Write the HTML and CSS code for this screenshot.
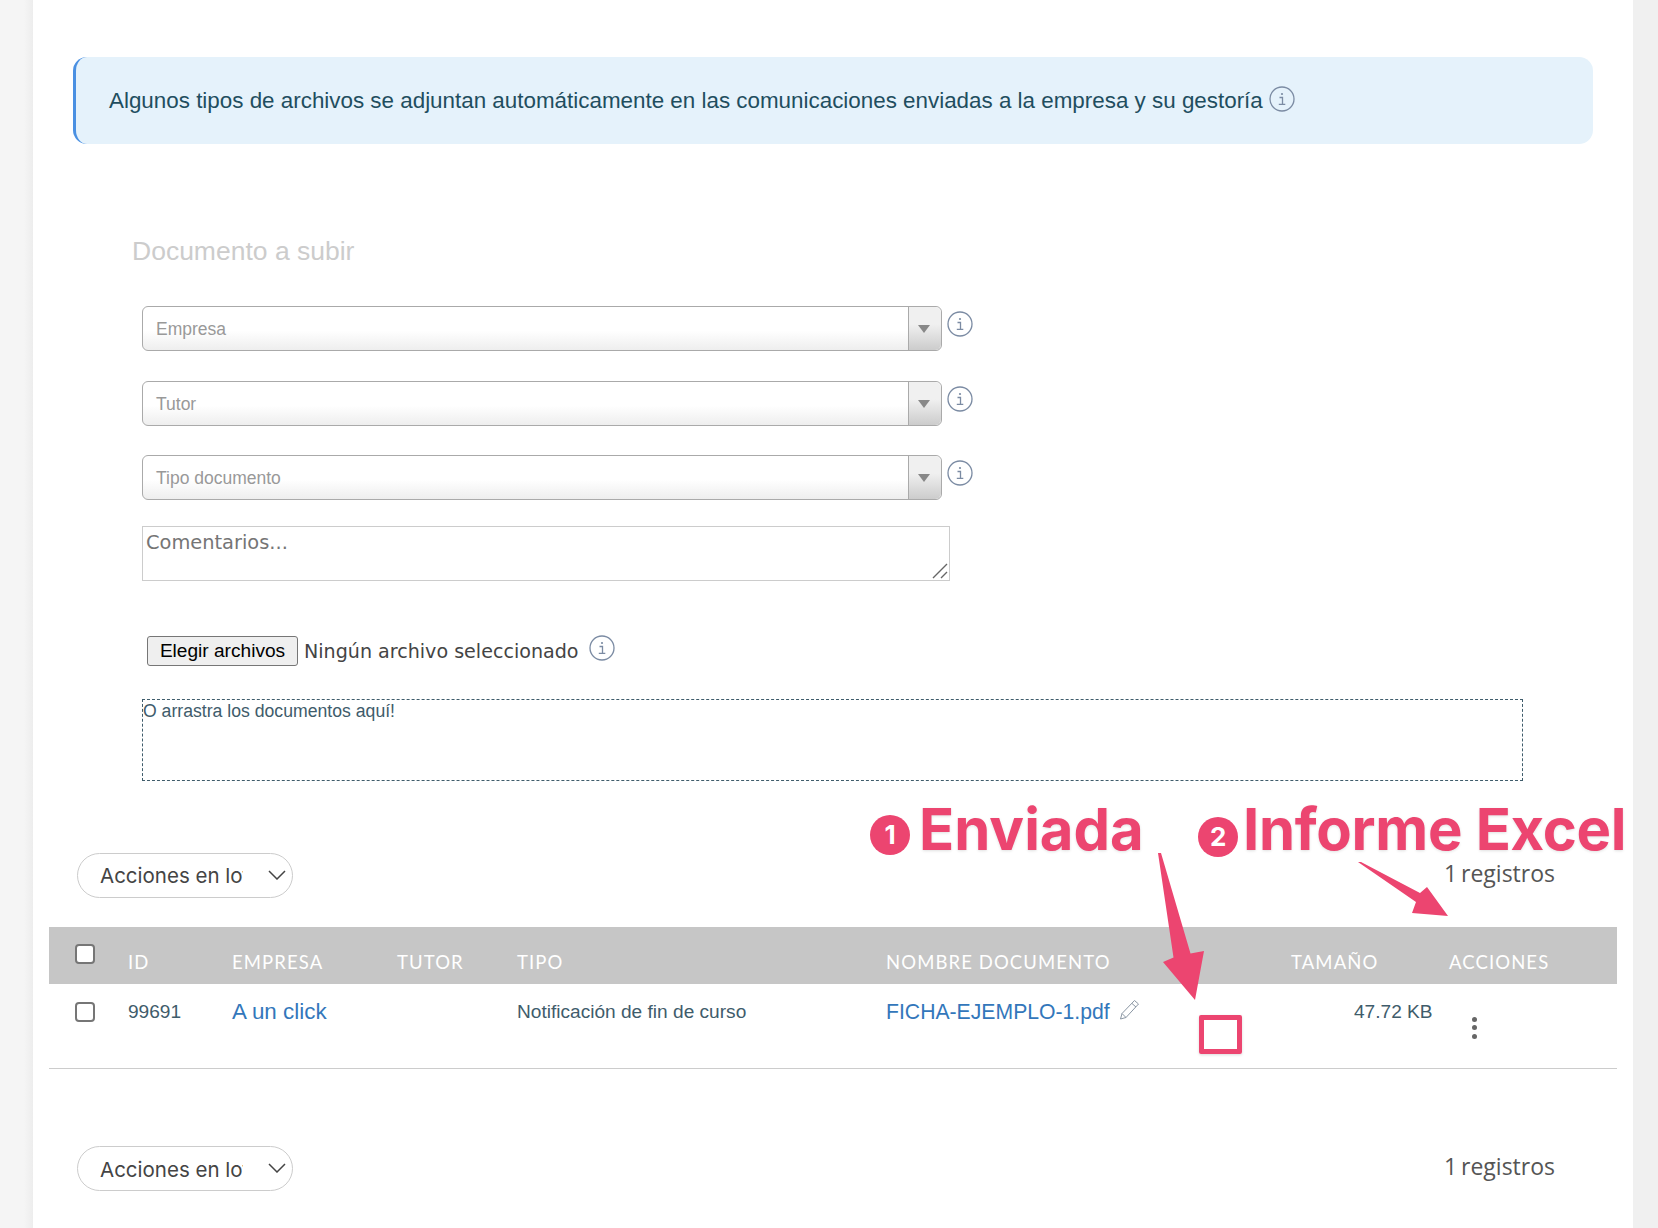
FILE: index.html
```html
<!DOCTYPE html>
<html lang="es">
<head>
<meta charset="utf-8">
<title>Documentos</title>
<link rel="stylesheet" href="styles.css">
</head>
<body>
<main class="card">
  <div class="alert">
    <span>Algunos tipos de archivos se adjuntan automáticamente en las comunicaciones enviadas a la empresa y su gestoría</span>
    <svg class="info" viewBox="0 0 26 26"><use href="#i-info"/></svg>
  </div>

  <section class="form">
    <h2 class="form-title">Documento a subir</h2>
    <div class="field">
      <div class="combo"><span class="combo-label">Empresa</span><span class="combo-arrow"><i class="tri"></i></span></div>
      <svg class="info" viewBox="0 0 26 26"><use href="#i-info"/></svg>
    </div>
    <div class="field">
      <div class="combo"><span class="combo-label">Tutor</span><span class="combo-arrow"><i class="tri"></i></span></div>
      <svg class="info" viewBox="0 0 26 26"><use href="#i-info"/></svg>
    </div>
    <div class="field">
      <div class="combo"><span class="combo-label">Tipo documento</span><span class="combo-arrow"><i class="tri"></i></span></div>
      <svg class="info" viewBox="0 0 26 26"><use href="#i-info"/></svg>
    </div>
    <div class="comment">
      <textarea class="comment-input" placeholder="Comentarios..."></textarea>
      <svg class="grip" viewBox="0 0 16 16"><path d="M1 15 15 1M9 15l6-6"/></svg>
    </div>
    <div class="file-row">
      <button class="file-btn" type="button">Elegir archivos</button>
      <span class="file-name">Ningún archivo seleccionado</span>
      <svg class="info" viewBox="0 0 26 26"><use href="#i-info"/></svg>
    </div>
    <div class="drop">O arrastra los documentos aquí!</div>
  </section>

  <div class="bar bar-top">
    <div class="bulk">
      <select class="bulk-select"><option>Acciones en lote</option></select>
      <svg class="chev" viewBox="0 0 18 10"><path d="M1 1l8 8 8-8"/></svg>
    </div>
    <span class="count">1 registros</span>
  </div>

  <table class="table">
    <thead>
      <tr>
        <th class="c-check"><input class="check" type="checkbox"></th>
        <th class="c-id">ID</th>
        <th class="c-emp">EMPRESA</th>
        <th class="c-tut">TUTOR</th>
        <th class="c-tipo">TIPO</th>
        <th class="c-doc">NOMBRE DOCUMENTO</th>
        <th class="c-env"></th>
        <th class="c-size">TAMAÑO</th>
        <th class="c-act">ACCIONES</th>
      </tr>
    </thead>
    <tbody>
      <tr>
        <td><input class="check" type="checkbox"></td>
        <td>99691</td>
        <td><a class="link link-emp" href="#">A un click</a></td>
        <td></td>
        <td>Notificación de fin de curso</td>
        <td class="doc-cell"><a class="link" href="#">FICHA-EJEMPLO-1.pdf</a>
          <svg class="pencil" viewBox="0 0 21 21"><path d="M15.5 1.5 19.5 5 7 18.5 1.5 20 3 14.5Z M13 4.5l4 3.5 M3 14.5l4 4"/></svg>
        </td>
        <td></td>
        <td class="size-cell">47.72 KB</td>
        <td class="act-cell"><span class="dots"><i></i><i></i><i></i></span></td>
      </tr>
    </tbody>
  </table>

  <div class="bar bar-bottom">
    <div class="bulk">
      <select class="bulk-select"><option>Acciones en lote</option></select>
      <svg class="chev" viewBox="0 0 18 10"><path d="M1 1l8 8 8-8"/></svg>
    </div>
    <span class="count">1 registros</span>
  </div>
</main>

<div class="note note-1"><span class="badge">1</span><span class="note-text">Enviada</span></div>
<div class="note note-2"><span class="badge">2</span><span class="note-text">Informe Excel</span></div>
<div class="mark"></div>
<svg class="arrows" viewBox="0 0 1658 1228">
  <path d="M1158 853 1161 853 1190.500 953.500 1204 951 1195 1000 1163 962 1173.500 957.500Z"/>
  <path d="M1358 862 1361 862 1420 893 1427 887 1448 916 1412 913 1416 902Z"/>
</svg>

<svg class="defs" width="0" height="0">
  <defs>
    <symbol id="i-info" viewBox="0 0 26 26">
      <circle cx="13" cy="13" r="12" fill="none" stroke="#7b8ba3" stroke-width="1.300"/>
      <path d="M10.500 11.500h3v6.500M9.800 18.300h6.500" fill="none" stroke="#7b8ba3" stroke-width="1.300"/>
      <circle cx="13" cy="8" r="1.100" fill="#7b8ba3"/>
    </symbol>
  </defs>
</svg>
</body>
</html>
```
FILE: styles.css
```css
* { box-sizing: border-box; }
html, body { margin: 0; height: 1228px; overflow: hidden; }
body {
  position: relative;
  background: linear-gradient(90deg, #f5f5f5 24px, #ededed 33px, #f0f0f0 33px);
  font-family: "Liberation Sans", Arial, sans-serif;
  color: #3f5c6b;
}
.card {
  width: 1600px;
  height: 1228px;
  margin-left: 33px;
  padding-top: 57px;
  background: #fff;
}
.info { width: 26px; height: 26px; flex: none; }

.alert {
  display: flex;
  align-items: center;
  gap: 6px;
  height: 87px;
  margin: 0 40px;
  padding-left: 33px;
  border-left: 3px solid #4a90e2;
  border-radius: 14px;
  background: #e5f2fb;
  color: #1f4e5f;
  font-size: 22.400px;
}
.alert .info { margin-top: -3px; }

.form { margin: 89px 0 0 99px; }
.form-title {
  margin: 0 0 37px;
  height: 36px;
  font-weight: 400;
  font-size: 26.500px;
  line-height: 36px;
  color: #ccc;
}
.field {
  display: flex;
  align-items: flex-start;
  gap: 5px;
  margin: 0 0 29.500px 10px;
}
.field .info { margin-top: 5px; }
.combo {
  display: flex;
  width: 800px;
  height: 45px;
  border: 1px solid #aaa;
  border-radius: 6px;
  background: linear-gradient(#fff 55%, #eee);
  font-size: 17.500px;
  color: #999;
}
.combo-label { flex: 1; padding: 0 0 0 13px; line-height: 45px; }
.combo-arrow {
  display: flex;
  align-items: center;
  justify-content: center;
  width: 33px;
  border-left: 1px solid #aaa;
  border-radius: 0 6px 6px 0;
  background: linear-gradient(#f0f0f0 40%, #ccc);
}
.tri {
  margin: 1px 2px 0 0;
  border-style: solid;
  border-width: 8px 6px 0;
  border-color: #888 transparent transparent;
}
.comment { position: relative; width: 808px; height: 55px; margin: -4px 0 0 10px; }
.comment-input {
  display: block;
  width: 100%;
  height: 100%;
  padding: 4px 3px;
  border: 1px solid #ccc;
  border-radius: 0;
  outline: 0;
  resize: none;
  font-family: "DejaVu Sans", sans-serif;
  font-size: 19.400px;
  color: #444;
}
.comment-input::placeholder { color: #757575; opacity: 1; }
.grip {
  position: absolute;
  right: 2px;
  bottom: 2px;
  width: 16px;
  height: 16px;
  fill: none;
  stroke: #666;
  stroke-width: 1.400;
}
.file-row {
  display: flex;
  align-items: center;
  height: 30px;
  margin: 55px 0 0 15px;
}
.file-btn {
  width: 151px;
  height: 30px;
  padding: 0;
  border: 1px solid #767676;
  border-radius: 3px;
  background: #efefef;
  font-family: "Liberation Sans", Arial, sans-serif;
  font-size: 19.100px;
  color: #000;
}
.file-name {
  margin-left: 6px;
  padding-top: 1px;
  font-family: "DejaVu Sans", sans-serif;
  font-size: 19.100px;
  color: #444;
}
.file-row .info { margin: -5px 0 0 10px; }
.drop {
  width: 1381px;
  height: 82px;
  margin: 33px 0 0 10px;
  border: 1px dashed #3f5c6b;
  font-size: 17.650px;
  line-height: 22px;
}

.bar {
  display: flex;
  align-items: center;
  justify-content: space-between;
  padding: 0 78px 0 44px;
}
.bar-top { height: 45px; margin-top: 72px; }
.bar-bottom { height: 45px; margin-top: 77px; }
.bulk { position: relative; width: 216px; height: 45px; }
.bulk-select {
  width: 100%;
  height: 100%;
  padding: 1px 49px 0 22px;
  border: 1px solid #ccc;
  border-radius: 23px;
  appearance: none;
  background: #fff;
  font-family: Inter, "Liberation Sans", sans-serif;
  font-size: 20.500px;
  color: #444;
}
.chev {
  position: absolute;
  right: 7px;
  top: 17px;
  width: 18px;
  height: 10px;
  fill: none;
  stroke: #444;
  stroke-width: 1.500;
}
.count {
  margin-bottom: 5px;
  font-family: "Open Sans", sans-serif;
  font-size: 23px;
  word-spacing: -2px;
  color: #555;
}

.table {
  width: 1568px;
  margin: 29px 0 0 16px;
  border-collapse: collapse;
  table-layout: fixed;
}
.table th {
  height: 57px;
  padding: 14px 0 0;
  background: #c6c6c6;
  text-align: left;
  font-family: Lato, sans-serif;
  font-weight: 400;
  font-size: 18.500px;
  letter-spacing: 1.100px;
  color: #fff;
}
.table td {
  height: 85px;
  padding: 0 0 28px;
  border-bottom: 1px solid #ccc;
  font-size: 19.100px;
  color: #3f5c6b;
}
.c-check { width: 79px; }
.c-id { width: 104px; }
.c-emp { width: 165px; }
.c-tut { width: 120px; }
.c-tipo { width: 369px; }
.c-doc { width: 300px; }
.c-env { width: 105px; }
.c-size { width: 158px; }
.table th:first-child, .table td:first-child { padding-left: 26px; }
.table th:first-child { padding-top: 0; padding-bottom: 3px; }
.check {
  display: block;
  width: 20px;
  height: 20px;
  margin: 0;
  border: 2px solid #767676;
  border-radius: 4px;
  appearance: none;
  background: #fff;
}
.link { color: #3377bb; text-decoration: none; font-size: 21.200px; }
.link-emp { font-size: 22.400px; }
.doc-cell { white-space: nowrap; }
.pencil {
  width: 21px;
  height: 21px;
  margin-left: 4px;
  vertical-align: -1px;
  fill: none;
  stroke: #8a96a3;
  stroke-width: 1;
}
.size-cell { padding-left: 63px !important; }
.act-cell { padding: 0 0 8px 23px !important; }
.act-cell .dots { display: inline-flex; flex-direction: column; gap: 3.500px; }
.dots i { display: block; width: 5px; height: 5px; border-radius: 50%; background: #666; }

.note {
  position: absolute;
  display: flex;
  align-items: center;
  color: #ec4570;
  font-family: Inter, sans-serif;
  font-weight: 700;
  font-size: 58px;
  line-height: 60px;
  text-shadow: 0 1px 3px rgba(0, 0, 0, .12);
}
.note-1 { left: 870px; top: 799px; gap: 9px; }
.note-2 { left: 1198px; top: 799px; gap: 5px; letter-spacing: -.3px; }
.badge {
  display: flex;
  align-items: center;
  justify-content: center;
  width: 40px;
  height: 40px;
  margin-top: 16px;
  border-radius: 50%;
  background: #ec4570;
  color: #fff;
  font-size: 26px;
  text-shadow: none;
}
.note-1 .badge { margin-top: 12px; }
.mark {
  position: absolute;
  left: 1199px;
  top: 1015px;
  width: 43px;
  height: 39px;
  border: 5px solid #ec4570;
  border-radius: 2px;
  box-shadow: 0 1px 3px rgba(0, 0, 0, .15);
}
.arrows {
  position: absolute;
  left: 0;
  top: 0;
  width: 1658px;
  height: 1228px;
  fill: #ec4570;
  pointer-events: none;
}
.defs { position: absolute; }
```
